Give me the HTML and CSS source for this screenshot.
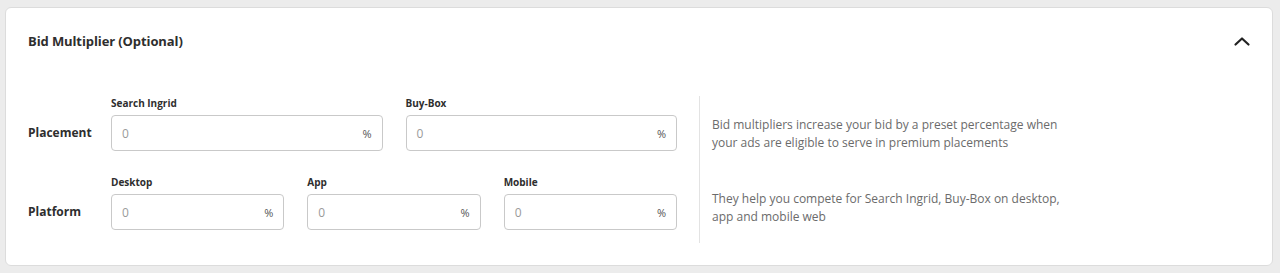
FILE: index.html
```html
<!DOCTYPE html>
<html lang="en">
<head>
  <meta charset="UTF-8" />
  <title>Bid Multiplier</title>
  <link rel="stylesheet" href="styles.css">
</head>
<body>
  <div class="panel">
    <div class="panel-header">
      <h2>Bid Multiplier (Optional)</h2>
      <svg class="chevron" width="18" height="11" viewBox="0 0 18 11">
        <path d="M2.5 8.5 L9 2.5 L15.5 8.5" fill="none" stroke="#222" stroke-width="2.2" stroke-linecap="round" stroke-linejoin="round"/>
      </svg>
    </div>
    <div class="panel-body">
      <div class="fields">
        <div class="row">
          <div class="row-label">Placement</div>
          <div class="inputs two">
            <label class="field">
              <span class="field-label">Search Ingrid</span>
              <span class="input"><span class="value">0</span><span class="unit">%</span></span>
            </label>
            <label class="field">
              <span class="field-label">Buy-Box</span>
              <span class="input"><span class="value">0</span><span class="unit">%</span></span>
            </label>
          </div>
        </div>
        <div class="row">
          <div class="row-label">Platform</div>
          <div class="inputs three">
            <label class="field">
              <span class="field-label">Desktop</span>
              <span class="input"><span class="value">0</span><span class="unit">%</span></span>
            </label>
            <label class="field">
              <span class="field-label">App</span>
              <span class="input"><span class="value">0</span><span class="unit">%</span></span>
            </label>
            <label class="field">
              <span class="field-label">Mobile</span>
              <span class="input"><span class="value">0</span><span class="unit">%</span></span>
            </label>
          </div>
        </div>
      </div>
      <div class="help">
        <p>Bid multipliers increase your bid by a preset percentage when your ads are eligible to serve in premium placements</p>
        <p>They help you compete for Search Ingrid, Buy-Box on desktop, app and mobile web</p>
      </div>
    </div>
  </div>
</body>
</html>
```

FILE: styles.css
```css
* { margin: 0; padding: 0; box-sizing: border-box; }
body {
  font-family: "Open Sans", "Noto Sans", sans-serif;
  background-color: #ececec;
  color: #2e2e2e;
  padding: 7px 7px 0 5px;
}
.panel {
  background-color: #fff;
  border: 1px solid #dcdcdc;
  border-radius: 6px;
}
.panel-header {
  display: flex;
  align-items: center;
  justify-content: space-between;
  padding: 23px 21px 23px 22px;
}
.panel-header h2 { font-size: 13px; line-height: 20px; font-weight: 700; color: #2e2e2e; letter-spacing: -0.1px; }
.chevron { display: block; }
.panel-body {
  display: flex;
  padding: 22px 0 22px 22px;
}
.fields {
  display: flex;
  flex-direction: column;
  gap: 24px;
  padding: 0 22px 13px 0;
}
.row { display: flex; align-items: flex-end; }
.row-label {
  width: 83px;
  font-size: 12px;
  font-weight: 700;
  line-height: 36px;
}
.inputs { display: grid; width: 566px; }
.inputs.two { grid-template-columns: 1fr 1fr; column-gap: 23px; }
.inputs.three { grid-template-columns: 1fr 1fr 1fr; column-gap: 23px; }
.field { display: flex; flex-direction: column; gap: 4px; }
.field-label { font-size: 10px; font-weight: 700; line-height: 15px; color: #2e2e2e; }
.input {
  display: flex;
  align-items: center;
  justify-content: space-between;
  height: 36px;
  padding: 0 10px 0 10px;
  border: 1px solid #c9c9c9;
  border-radius: 4px;
  font-size: 12px;
}
.value { color: #9a9a9a; }
.unit { color: #555; font-size: 11px; }
.help {
  border-left: 1px solid #e3e3e3;
  padding: 20px 0 0 12px;
  display: flex;
  flex-direction: column;
  gap: 38px;
}
.help p {
  width: 355px;
  font-size: 12px;
  line-height: 18px;
  color: #6b6b6b;
}
```
